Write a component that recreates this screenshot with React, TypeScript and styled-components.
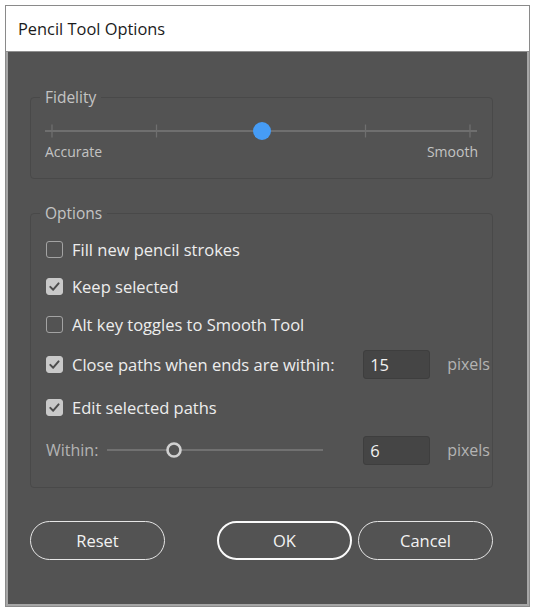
import styled, { createGlobalStyle } from "styled-components";

const GlobalStyle = createGlobalStyle`
    html, body {
        margin: 0;
        padding: 0;
        background: #ffffff;
    }
    body {
        font-family: "Open Sans", "Noto Sans", sans-serif;
    }
    * {
        box-sizing: border-box;
    }
`

const Check = ({checked}: { checked?: boolean }) => (
    <CheckBox checked={checked}>
        {checked && (
            <svg width="17" height="17" viewBox="0 0 17 17">
                <path d="M4.3 8.9 L7.2 11.7 L12.6 5.4" fill="none" stroke="#4d4d4d" strokeWidth="2"
                      strokeLinecap="round" strokeLinejoin="round"/>
            </svg>
        )}
    </CheckBox>
)

const FidelitySlider = () => {
    const ticks = [7, 111.5, 216, 320.5, 425];
    return (
        <svg width="432" height="20" viewBox="0 0 432 20">
            <line x1="0" y1="10" x2="432" y2="10" stroke="#6f6f6f" strokeWidth="2"/>
            {ticks.map(t => (
                <line key={t} x1={t} y1="3.5" x2={t} y2="16.5" stroke="#6f6f6f" strokeWidth="1.3"/>
            ))}
            <circle cx="217" cy="10" r="9" fill="#469cf5"/>
        </svg>
    )
}

const WithinSlider = () => (
    <svg width="216" height="18" viewBox="0 0 216 18">
        <line x1="0" y1="9" x2="216" y2="9" stroke="#717171" strokeWidth="2"/>
        <circle cx="67" cy="9" r="6.5" fill="#535353" stroke="#d0d0d0" strokeWidth="2.6"/>
    </svg>
)

export default function App() {
    return (
        <>
            <GlobalStyle/>
            <Window>
                <TitleBar>Pencil Tool Options</TitleBar>
                <Panel>
                    <Group height={82}>
                        <Legend>Fidelity</Legend>
                        <FidelitySlider/>
                        <ScaleLabels>
                            <span>Accurate</span>
                            <span>Smooth</span>
                        </ScaleLabels>
                    </Group>

                    <OptionsGroup height={275}>
                        <Legend>Options</Legend>
                        <Row>
                            <Check/>
                            <OptionText>Fill new pencil strokes</OptionText>
                        </Row>
                        <Row>
                            <Check checked/>
                            <OptionText>Keep selected</OptionText>
                        </Row>
                        <Row>
                            <Check/>
                            <OptionText>Alt key toggles to Smooth Tool</OptionText>
                        </Row>
                        <FieldRow>
                            <Row>
                                <Check checked/>
                                <OptionText>Close paths when ends are within:</OptionText>
                            </Row>
                            <NumberBox>15</NumberBox>
                            <Unit>pixels</Unit>
                        </FieldRow>
                        <Row offset={3.5}>
                            <Check checked/>
                            <OptionText>Edit selected paths</OptionText>
                        </Row>
                        <FieldRow offset={2.5}>
                            <Row>
                                <Unit>Within:</Unit>
                                <WithinSlider/>
                            </Row>
                            <NumberBox>6</NumberBox>
                            <Unit>pixels</Unit>
                        </FieldRow>
                    </OptionsGroup>

                    <ButtonBar>
                        <Button>Reset</Button>
                        <ButtonGroup>
                            <Button primary>OK</Button>
                            <Button>Cancel</Button>
                        </ButtonGroup>
                    </ButtonBar>
                </Panel>
            </Window>
        </>
    );
}

const Window = styled.div`
    margin: 5px 0 0 5px;
    width: 525px;
    height: 602px;
    border: 1px solid #8a8a8a;
    display: flex;
    flex-direction: column;
`

const TitleBar = styled.div`
    height: 46px;
    flex-shrink: 0;
    background: #ffffff;
    border-bottom: 1px solid #8f8f8f;
    padding-left: 12px;
    display: flex;
    align-items: center;
    font-size: 16.4px;
    color: #1b1b1b;
`

const Panel = styled.div`
    flex: 1;
    background: #535353;
    border: 2px solid #a6a6a6;
    border-top: none;
    padding: 45px 34px 0 22px;
    display: flex;
    flex-direction: column;
`

const Group = styled.div<{ height: number }>`
    position: relative;
    height: ${p => p.height}px;
    border: 1px solid #494949;
    border-radius: 4px;
    padding: 23px 15px 0 14px;
`

const OptionsGroup = styled(Group)`
    margin-top: 34px;
    padding: 23px 2px 0 15px;
    display: flex;
    flex-direction: column;
    gap: 13.5px;
`

const Legend = styled.span`
    position: absolute;
    top: -11px;
    left: 9px;
    padding: 0 5px;
    background: #535353;
    font-size: 15.5px;
    line-height: 20px;
    color: #c4c4c4;
`

const ScaleLabels = styled.div`
    display: flex;
    justify-content: space-between;
    width: 433px;
    margin-top: -4px;
    font-size: 14px;
    line-height: 20px;
    color: #c3c3c3;
`

const Row = styled.div<{ offset?: number }>`
    display: flex;
    align-items: center;
    gap: 9px;
    height: 24px;
    margin-top: ${p => p.offset ?? 0}px;
`

const FieldRow = styled.div<{ offset?: number }>`
    display: grid;
    grid-template-columns: 1fr 67px auto;
    column-gap: 17px;
    align-items: center;
    height: 29px;
    margin-top: ${p => p.offset ?? 0}px;
`

const CheckBox = styled.div<{ checked?: boolean }>`
    width: 17px;
    height: 17px;
    flex-shrink: 0;
    border-radius: 3px;
    border: 1.5px solid ${p => p.checked ? "#c9c9c9" : "#a3a3a3"};
    background: ${p => p.checked ? "#c9c9c9" : "transparent"};
    display: flex;
    align-items: center;
    justify-content: center;

    svg {
        display: block;
        flex-shrink: 0;
    }
`

const OptionText = styled.span`
    font-size: 16.5px;
    color: #ededed;
    white-space: nowrap;
`

const Unit = styled.span`
    font-size: 16px;
    color: #b4b4b4;
`

const NumberBox = styled.div`
    height: 29px;
    background: #454545;
    border: 1px solid #3e3e3e;
    border-radius: 3px;
    padding-left: 6px;
    display: flex;
    align-items: center;
    font-size: 16.5px;
    color: #f2f2f2;
`

const ButtonBar = styled.div`
    display: flex;
    justify-content: space-between;
    margin-top: 33px;
`

const ButtonGroup = styled.div`
    display: flex;
    gap: 6px;
`

const Button = styled.button<{ primary?: boolean }>`
    width: 135px;
    height: 39px;
    border-radius: 20px;
    border: ${p => p.primary ? "2.5px solid #fafafa" : "1.5px solid #e6e6e6"};
    background: transparent;
    color: #f2f2f2;
    font-family: inherit;
    font-size: 16.5px;
    padding: 0;
`
